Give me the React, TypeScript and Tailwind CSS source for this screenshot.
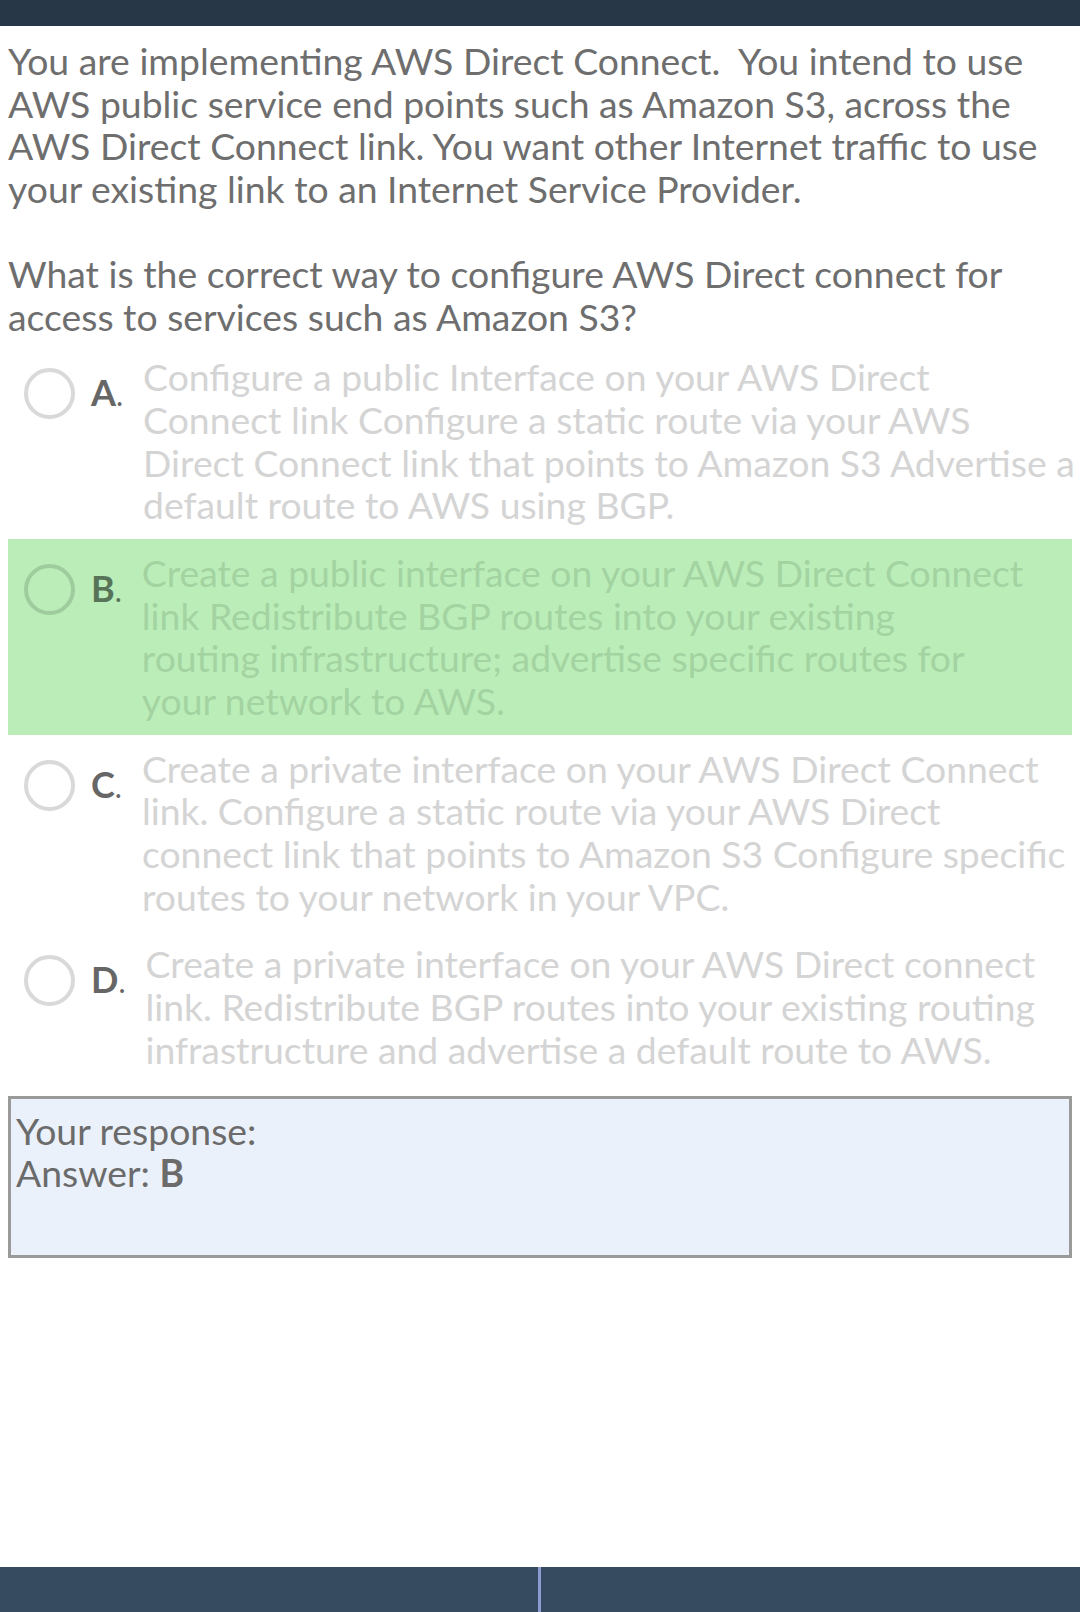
import React from "react";

type Opt = { letter: string; lines: string[]; correct?: boolean };

const options: Opt[] = [
  {
    letter: "A",
    lines: [
      "Configure a public Interface on your AWS Direct",
      "Connect link Configure a static route via your AWS",
      "Direct Connect link that points to Amazon S3 Advertise a",
      "default route to AWS using BGP.",
    ],
  },
  {
    letter: "B",
    lines: [
      "Create a public interface on your AWS Direct Connect",
      "link Redistribute BGP routes into your existing",
      "routing infrastructure; advertise specific routes for",
      "your network to AWS.",
    ],
    correct: true,
  },
  {
    letter: "C",
    lines: [
      "Create a private interface on your AWS Direct Connect",
      "link. Configure a static route via your AWS Direct",
      "connect link that points to Amazon S3 Configure specific",
      "routes to your network in your VPC.",
    ],
  },
  {
    letter: "D",
    lines: [
      "Create a private interface on your AWS Direct connect",
      "link. Redistribute BGP routes into your existing routing",
      "infrastructure and advertise a default route to AWS.",
    ],
  },
];

function Option({ o }: { o: Opt }) {
  const green = !!o.correct;
  return (
    <div className={`flex items-start py-[12.5px] pl-[16px] ${green ? "bg-[#bbedb9]" : ""}`}>
      <div className="flex items-center gap-[16px] mt-[12px] shrink-0">
        <div
          className={`w-[51px] h-[51px] rounded-full border-[4px] ${green ? "border-[#9fcc9d]" : "border-[#d9d9d9]"}`}
        />
        <div className={`text-[36px] ${green ? "text-[#577458]" : "text-[#666666]"}`}>
          <span className="font-bold">{o.letter}</span>
          <span className="text-[30px]">.</span>
        </div>
      </div>
      <div className={`ml-[20px] flex-1 min-w-0 ${green ? "text-[#a3d3a1]" : "text-[#d4d4d4]"}`}>
        {o.lines.map((l, i) => (
          <div key={i} className="whitespace-nowrap">
            {l}
          </div>
        ))}
      </div>
    </div>
  );
}

export default function App() {
  return (
    <div className="w-[1080px] h-[1612px] bg-white flex flex-col font-['Lato',sans-serif] text-[37.33px] leading-[42.67px] text-[#6e6e6e] overflow-hidden">
      <div className="h-[26px] bg-[#283747] shrink-0" />
      <div className="px-[8px] pt-[14px]">
        <p className="mb-[42.67px]">
          You are implementing AWS Direct Connect.&nbsp; You intend to use AWS public service end points such as Amazon S3, across the AWS Direct Connect link. You want other Internet traffic to use your existing link to an Internet Service Provider.
        </p>
        <p>What is the correct way to configure AWS Direct connect for access to services such as Amazon S3?</p>
        <div className="mt-[5px]">
          {options.map((o) => (
            <Option key={o.letter} o={o} />
          ))}
        </div>
        <div className="mt-[12px] h-[162px] border-[3px] border-[#9a9a9a] bg-[#eaf1fa] pl-[5px] pt-[11px] text-[#6b6b6b]">
          <div>Your response:</div>
          <div>
            Answer: <span className="font-bold">B</span>
          </div>
        </div>
      </div>
      <div className="flex-1" />
      <div className="h-[45px] shrink-0 bg-[#364b5f] flex">
        <div className="w-[538px]" />
        <div className="w-[3px] bg-[#8e9cd1]" />
        <div className="flex-1" />
      </div>
    </div>
  );
}
